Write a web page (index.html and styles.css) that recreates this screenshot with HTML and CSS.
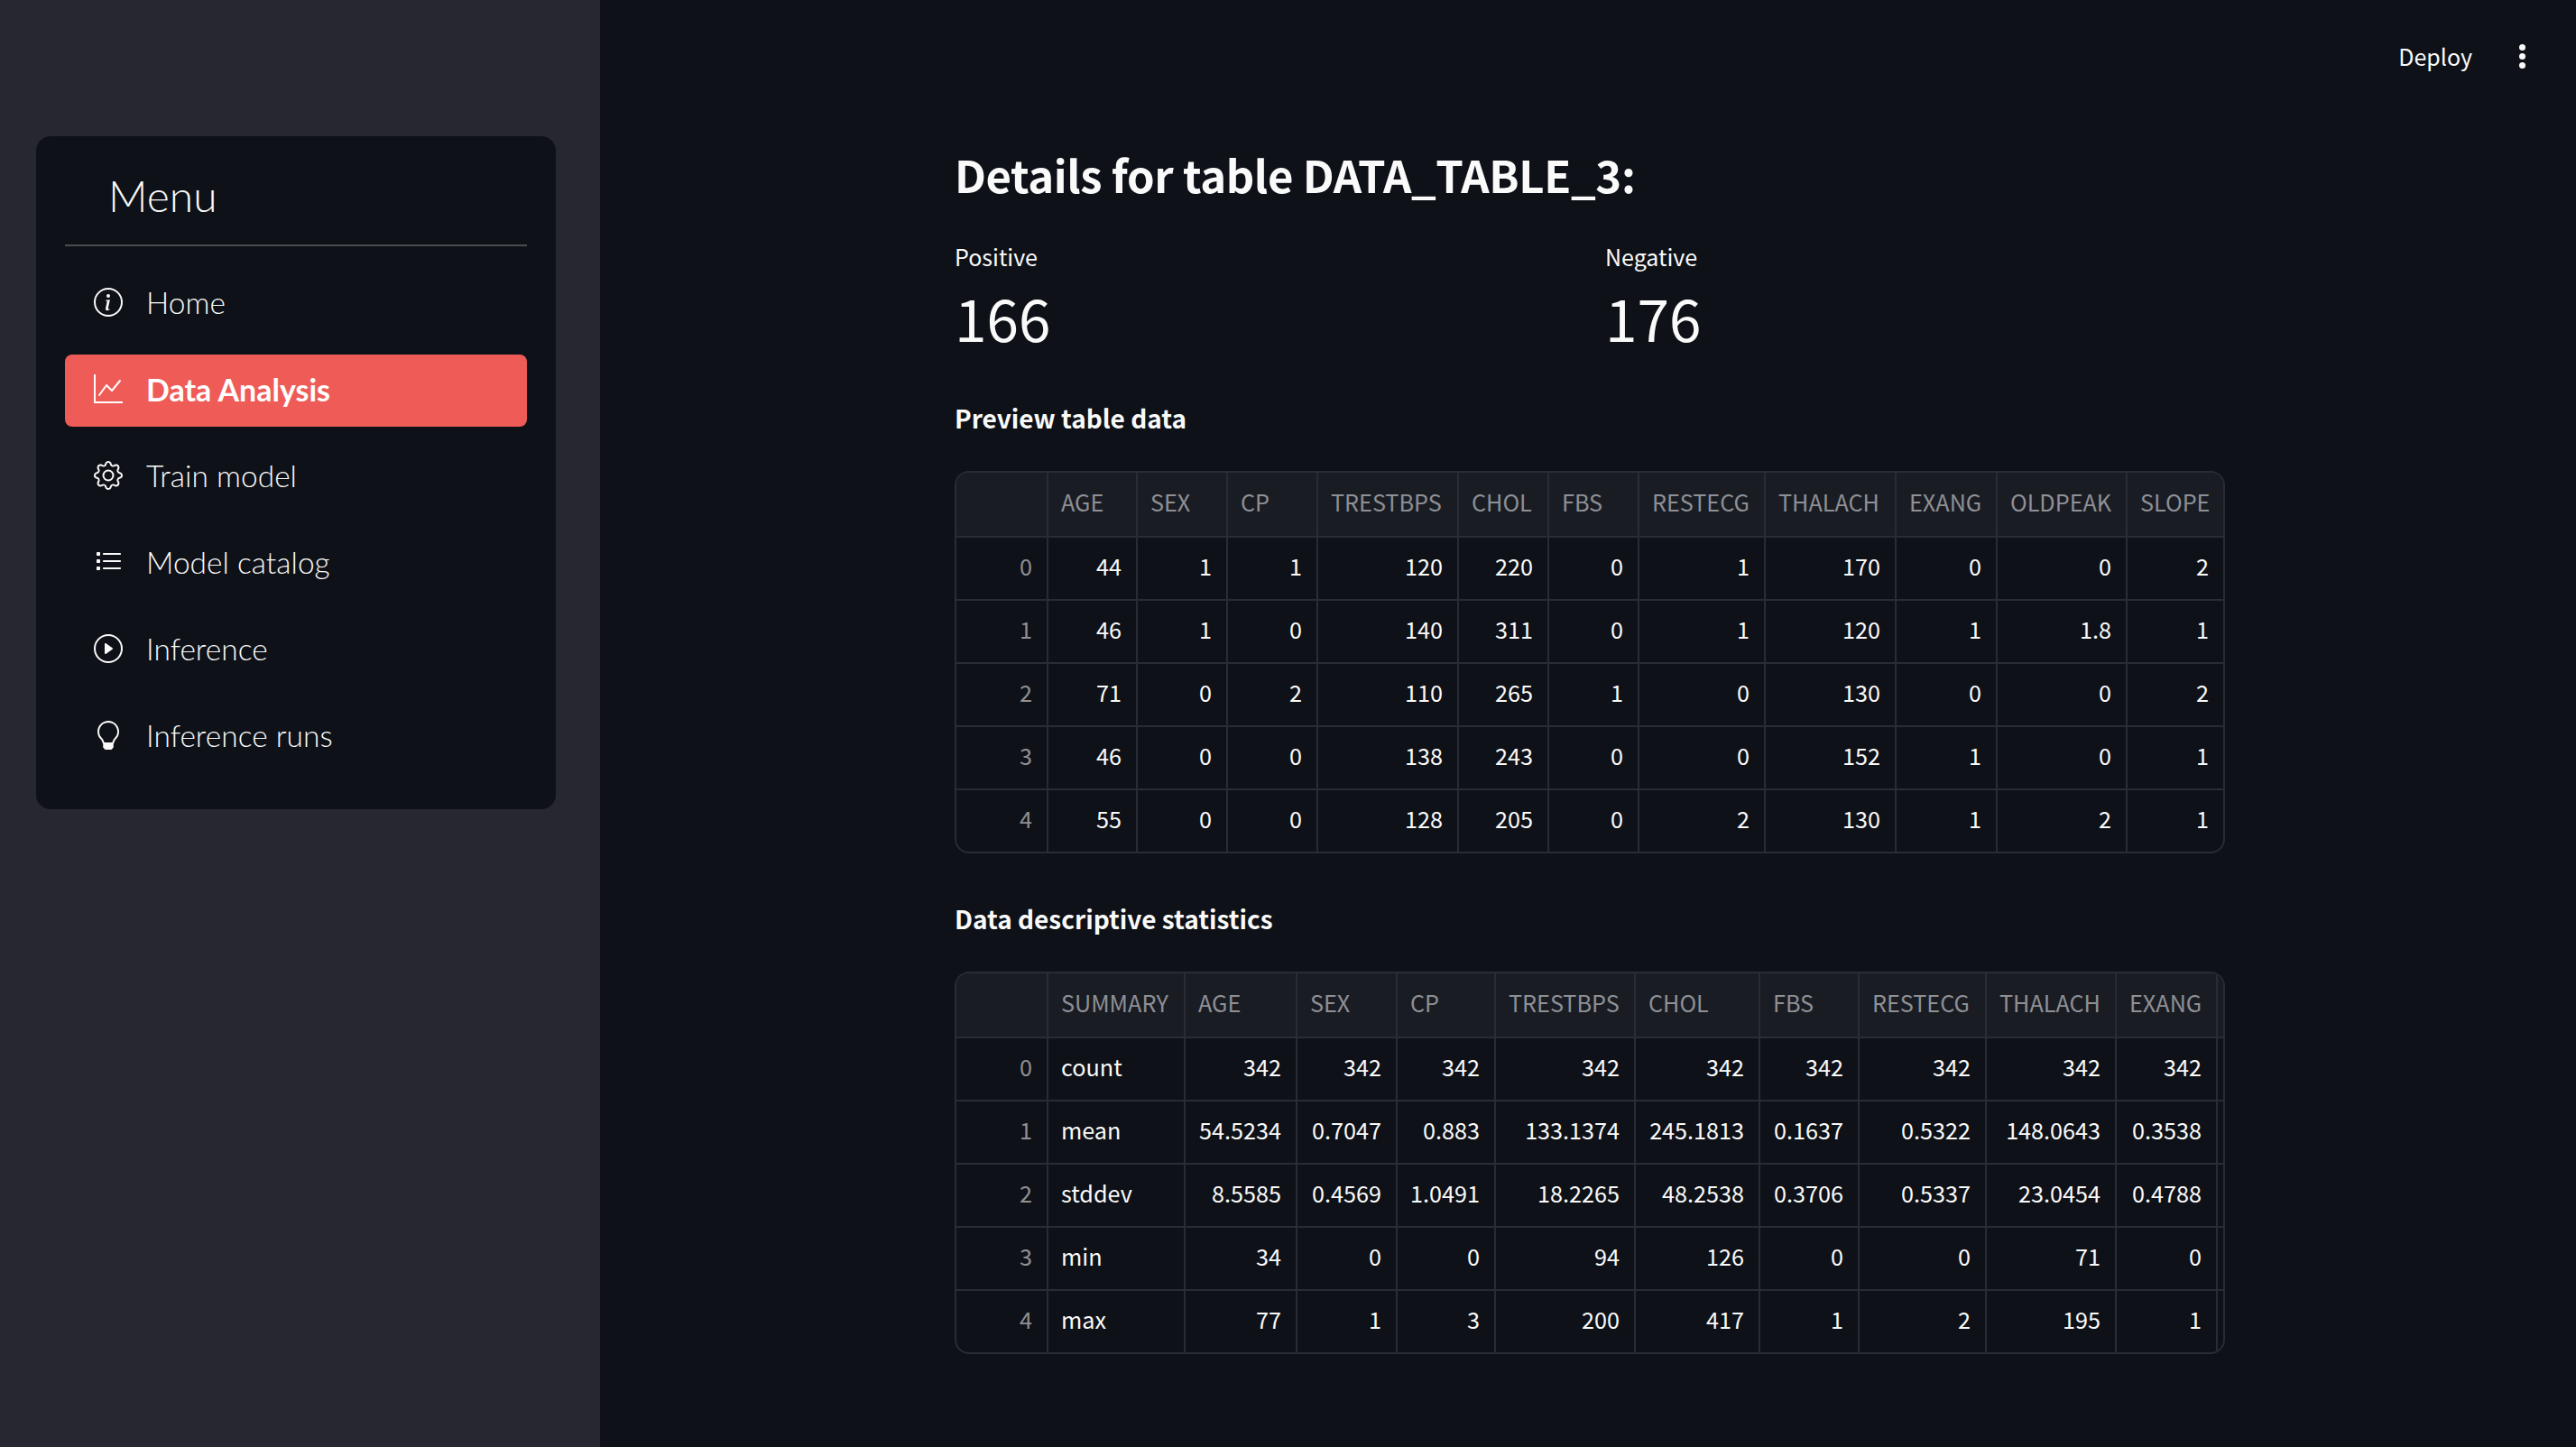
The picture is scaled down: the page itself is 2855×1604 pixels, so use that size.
FILE: index.html
```html
<!DOCTYPE html>
<html lang="en">
<head>
<meta charset="utf-8">
<title>Data Analysis</title>
<link rel="stylesheet" href="styles.css">
</head>
<body>
<div class="app">
  <aside class="sidebar">
    <nav class="menu">
      <div class="menu-title">Menu</div>
      <hr class="menu-rule">
      <ul class="menu-list">
        <li class="menu-item">
          <svg class="menu-icon" viewBox="0 0 16 16"><path d="M8 15A7 7 0 1 1 8 1a7 7 0 0 1 0 14zm0 1A8 8 0 1 0 8 0a8 8 0 0 0 0 16z"/><path d="m8.93 6.588-2.29.287-.082.38.45.083c.294.07.352.176.288.469l-.738 3.468c-.194.897.105 1.319.808 1.319.545 0 1.178-.252 1.465-.598l.088-.416c-.2.176-.492.246-.686.246-.275 0-.375-.193-.304-.533L8.93 6.588zM9 4.5a1 1 0 1 1-2 0 1 1 0 0 1 2 0z"/></svg>
          <span>Home</span>
        </li>
        <li class="menu-item active">
          <svg class="menu-icon" viewBox="0 0 16 16"><path fill-rule="evenodd" d="M0 0h1v15h15v1H0V0Zm14.817 3.113a.5.5 0 0 1 .07.704l-4.5 5.5a.5.5 0 0 1-.74.037L7.06 6.767l-3.656 5.027a.5.5 0 0 1-.808-.588l4-5.5a.5.5 0 0 1 .758-.06l2.609 2.61 4.15-5.073a.5.5 0 0 1 .704-.07Z"/></svg>
          <span>Data Analysis</span>
        </li>
        <li class="menu-item">
          <svg class="menu-icon" viewBox="0 0 16 16"><path d="M8 4.754a3.246 3.246 0 1 0 0 6.492 3.246 3.246 0 0 0 0-6.492zM5.754 8a2.246 2.246 0 1 1 4.492 0 2.246 2.246 0 0 1-4.492 0z"/><path d="M9.796 1.343c-.527-1.79-3.065-1.79-3.592 0l-.094.319a.873.873 0 0 1-1.255.52l-.292-.16c-1.64-.892-3.433.902-2.54 2.541l.159.292a.873.873 0 0 1-.52 1.255l-.319.094c-1.79.527-1.79 3.065 0 3.592l.319.094a.873.873 0 0 1 .52 1.255l-.16.292c-.892 1.64.901 3.434 2.541 2.54l.292-.159a.873.873 0 0 1 1.255.52l.094.319c.527 1.79 3.065 1.79 3.592 0l.094-.319a.873.873 0 0 1 1.255-.52l.292.16c1.64.893 3.434-.902 2.54-2.541l-.159-.292a.873.873 0 0 1 .52-1.255l.319-.094c1.79-.527 1.79-3.065 0-3.592l-.319-.094a.873.873 0 0 1-.52-1.255l.16-.292c.893-1.64-.902-3.433-2.541-2.54l-.292.159a.873.873 0 0 1-1.255-.52l-.094-.319zm-2.633.283c.246-.835 1.428-.835 1.674 0l.094.319a1.873 1.873 0 0 0 2.693 1.115l.291-.16c.764-.415 1.6.42 1.184 1.185l-.159.292a1.873 1.873 0 0 0 1.116 2.692l.318.094c.835.246.835 1.428 0 1.674l-.319.094a1.873 1.873 0 0 0-1.115 2.693l.16.291c.415.764-.42 1.6-1.185 1.184l-.291-.159a1.873 1.873 0 0 0-2.693 1.116l-.094.318c-.246.835-1.428.835-1.674 0l-.094-.319a1.873 1.873 0 0 0-2.692-1.115l-.292.16c-.764.415-1.6-.42-1.184-1.185l.159-.291A1.873 1.873 0 0 0 1.945 8.93l-.319-.094c-.835-.246-.835-1.428 0-1.674l.319-.094A1.873 1.873 0 0 0 3.06 4.377l-.16-.292c-.415-.764.42-1.6 1.185-1.184l.292.159a1.873 1.873 0 0 0 2.692-1.115l.094-.319z"/></svg>
          <span>Train model</span>
        </li>
        <li class="menu-item">
          <svg class="menu-icon" viewBox="0 0 16 16"><rect x="1.5" y="2.5" width="2" height="2" rx=".2"/><rect x="1.5" y="6.5" width="2" height="2" rx=".2"/><rect x="1.5" y="10.5" width="2" height="2" rx=".2"/><rect x="5" y="3" width="10" height="1" rx=".4"/><rect x="5" y="7" width="10" height="1" rx=".4"/><rect x="5" y="11" width="10" height="1" rx=".4"/></svg>
          <span>Model catalog</span>
        </li>
        <li class="menu-item">
          <svg class="menu-icon" viewBox="0 0 16 16"><path d="M8 15A7 7 0 1 1 8 1a7 7 0 0 1 0 14zm0 1A8 8 0 1 0 8 0a8 8 0 0 0 0 16z"/><path d="M6.271 5.055a.5.5 0 0 1 .52.038l3.5 2.5a.5.5 0 0 1 0 .814l-3.5 2.5A.5.5 0 0 1 6 10.5v-5a.5.5 0 0 1 .271-.445z"/></svg>
          <span>Inference</span>
        </li>
        <li class="menu-item">
          <svg class="menu-icon" viewBox="0 0 16 16"><path d="M2 6a6 6 0 1 1 10.174 4.31c-.203.196-.359.4-.453.619l-.762 1.769A.5.5 0 0 1 10.5 13a.5.5 0 0 1 0 1 .5.5 0 0 1 0 1l-.224.447a1 1 0 0 1-.894.553H6.618a1 1 0 0 1-.894-.553L5.5 15a.5.5 0 0 1 0-1 .5.5 0 0 1 0-1 .5.5 0 0 1-.46-.302l-.761-1.77a1.964 1.964 0 0 0-.453-.618A5.984 5.984 0 0 1 2 6zm6-5a5 5 0 0 0-3.479 8.592c.263.254.514.564.676.941L5.83 12h4.342l.632-1.467c.162-.377.413-.687.676-.941A5 5 0 0 0 8 1z"/></svg>
          <span>Inference runs</span>
        </li>
      </ul>
    </nav>
  </aside>
  <main class="main">
    <header class="topbar">
      <span class="deploy">Deploy</span>
      <span class="kebab"><i></i><i></i><i></i></span>
    </header>
    <section class="content">
      <h1 class="title">Details for table DATA_TABLE_3:</h1>
      <div class="metrics">
        <div class="metric"><div class="metric-label">Positive</div><div class="metric-value">166</div></div>
        <div class="metric"><div class="metric-label">Negative</div><div class="metric-value">176</div></div>
      </div>
      <h2 class="subtitle first">Preview table data</h2>
      <div class="grid preview">
        <div class="c h"></div><div class="c h">AGE</div><div class="c h">SEX</div><div class="c h">CP</div><div class="c h">TRESTBPS</div><div class="c h">CHOL</div><div class="c h">FBS</div><div class="c h">RESTECG</div><div class="c h">THALACH</div><div class="c h">EXANG</div><div class="c h">OLDPEAK</div><div class="c h e">SLOPE</div>
        <div class="c i">0</div><div class="c">44</div><div class="c">1</div><div class="c">1</div><div class="c">120</div><div class="c">220</div><div class="c">0</div><div class="c">1</div><div class="c">170</div><div class="c">0</div><div class="c">0</div><div class="c e">2</div>
        <div class="c i">1</div><div class="c">46</div><div class="c">1</div><div class="c">0</div><div class="c">140</div><div class="c">311</div><div class="c">0</div><div class="c">1</div><div class="c">120</div><div class="c">1</div><div class="c">1.8</div><div class="c e">1</div>
        <div class="c i">2</div><div class="c">71</div><div class="c">0</div><div class="c">2</div><div class="c">110</div><div class="c">265</div><div class="c">1</div><div class="c">0</div><div class="c">130</div><div class="c">0</div><div class="c">0</div><div class="c e">2</div>
        <div class="c i">3</div><div class="c">46</div><div class="c">0</div><div class="c">0</div><div class="c">138</div><div class="c">243</div><div class="c">0</div><div class="c">0</div><div class="c">152</div><div class="c">1</div><div class="c">0</div><div class="c e">1</div>
        <div class="c i b">4</div><div class="c b">55</div><div class="c b">0</div><div class="c b">0</div><div class="c b">128</div><div class="c b">205</div><div class="c b">0</div><div class="c b">2</div><div class="c b">130</div><div class="c b">1</div><div class="c b">2</div><div class="c b e">1</div>
      </div>
      <h2 class="subtitle second">Data descriptive statistics</h2>
      <div class="grid stats">
        <div class="c h"></div><div class="c h">SUMMARY</div><div class="c h">AGE</div><div class="c h">SEX</div><div class="c h">CP</div><div class="c h">TRESTBPS</div><div class="c h">CHOL</div><div class="c h">FBS</div><div class="c h">RESTECG</div><div class="c h">THALACH</div><div class="c h">EXANG</div><div class="c h e"></div>
        <div class="c i">0</div><div class="c t">count</div><div class="c">342</div><div class="c">342</div><div class="c">342</div><div class="c">342</div><div class="c">342</div><div class="c">342</div><div class="c">342</div><div class="c">342</div><div class="c">342</div><div class="c e"></div>
        <div class="c i">1</div><div class="c t">mean</div><div class="c">54.5234</div><div class="c">0.7047</div><div class="c">0.883</div><div class="c">133.1374</div><div class="c">245.1813</div><div class="c">0.1637</div><div class="c">0.5322</div><div class="c">148.0643</div><div class="c">0.3538</div><div class="c e"></div>
        <div class="c i">2</div><div class="c t">stddev</div><div class="c">8.5585</div><div class="c">0.4569</div><div class="c">1.0491</div><div class="c">18.2265</div><div class="c">48.2538</div><div class="c">0.3706</div><div class="c">0.5337</div><div class="c">23.0454</div><div class="c">0.4788</div><div class="c e"></div>
        <div class="c i">3</div><div class="c t">min</div><div class="c">34</div><div class="c">0</div><div class="c">0</div><div class="c">94</div><div class="c">126</div><div class="c">0</div><div class="c">0</div><div class="c">71</div><div class="c">0</div><div class="c e"></div>
        <div class="c i b">4</div><div class="c t b">max</div><div class="c b">77</div><div class="c b">1</div><div class="c b">3</div><div class="c b">200</div><div class="c b">417</div><div class="c b">1</div><div class="c b">2</div><div class="c b">195</div><div class="c b">1</div><div class="c b e"></div>
      </div>
    </section>
  </main>
</div>
</body>
</html>
```

FILE: styles.css
```css
* { box-sizing: border-box; }
html, body { margin: 0; height: 100%; background: #0e1117; }
body { font-family: "Noto Sans CJK SC", "Noto Sans", sans-serif; color: #fafafa; overflow: hidden; }

.app { display: flex; height: 1604px; }

.sidebar { width: 665px; flex: none; background: #262730; padding: 151px 49px 0 40px; }
.menu { background: #0e1117; border-radius: 16px; height: 746px; padding: 0 32px; font-family: "Lato", sans-serif; }
.menu-title { font-size: 48px; font-weight: 300; line-height: 56px; padding: 38px 0 26px 48px; }
.menu-rule { margin: 0; border: 0; border-top: 2px solid #4b4d52; }
.menu-list { list-style: none; margin: 24px 0 0; padding: 0; display: flex; flex-direction: column; gap: 16px; }
.menu-item { height: 80px; display: flex; align-items: center; gap: 26px; padding: 0 32px 4px; border-radius: 8px; font-size: 33.5px; font-weight: 300; color: #fafafa; }
.menu-item.active { background: #ef5b56; font-size: 34px; font-weight: 700; color: #fff; }
.menu-icon { width: 32px; height: 32px; fill: currentColor; flex: none; }

.main { flex: 1; min-width: 0; }
.topbar { height: 128px; display: flex; justify-content: flex-end; align-items: flex-start; padding: 42px 56px 0 0; gap: 52px; }
.deploy { font-size: 25px; line-height: 40px; }
.kebab { display: flex; flex-direction: column; gap: 3px; padding-top: 7px; }
.kebab i { width: 7px; height: 7px; border-radius: 50%; background: #fafafa; }

.content { padding-left: 393px; width: 1801px; }
.title { margin: 27px 0 0; font-size: 49px; font-weight: 700; line-height: 76px; letter-spacing: -0.4px; }
.metrics { display: grid; grid-template-columns: 1fr 1fr; column-gap: 34px; margin-top: 33px; }
.metric-label { font-size: 25px; line-height: 40px; }
.metric-value { font-size: 64px; line-height: 90px; margin-top: 2px; }
.subtitle { margin: 0; font-size: 28px; font-weight: 700; line-height: 44px; }
.subtitle.first { margin-top: 45px; }
.subtitle.second { margin-top: 50px; }

.grid { display: grid; border: 2px solid #2a2c33; border-radius: 16px; overflow: hidden; font-size: 25.2px; grid-template-rows: 72px repeat(4, 70px) 68px; margin-top: 37px; }
.preview { grid-template-columns: 102px 99px 100px 100px 156px 100px 100px 140px 145px 112px 144px 106px; }
.stats { grid-template-columns: 102px 152px 124px 111px 109px 155px 138px 110px 141px 144px 112px 6px; }
.c { display: flex; align-items: center; justify-content: flex-end; padding: 0 16px 5px 14px; line-height: 1; border-right: 2px solid #2a2c33; border-bottom: 2px solid #2a2c33; white-space: nowrap; overflow: hidden; }
.c.h { justify-content: flex-start; background: #1a1c24; color: #8e9095; }
.c.i { color: #8e9095; }
.c.t { justify-content: flex-start; }
.c.e { border-right: 0; }
.c.b { border-bottom: 0; }
```
